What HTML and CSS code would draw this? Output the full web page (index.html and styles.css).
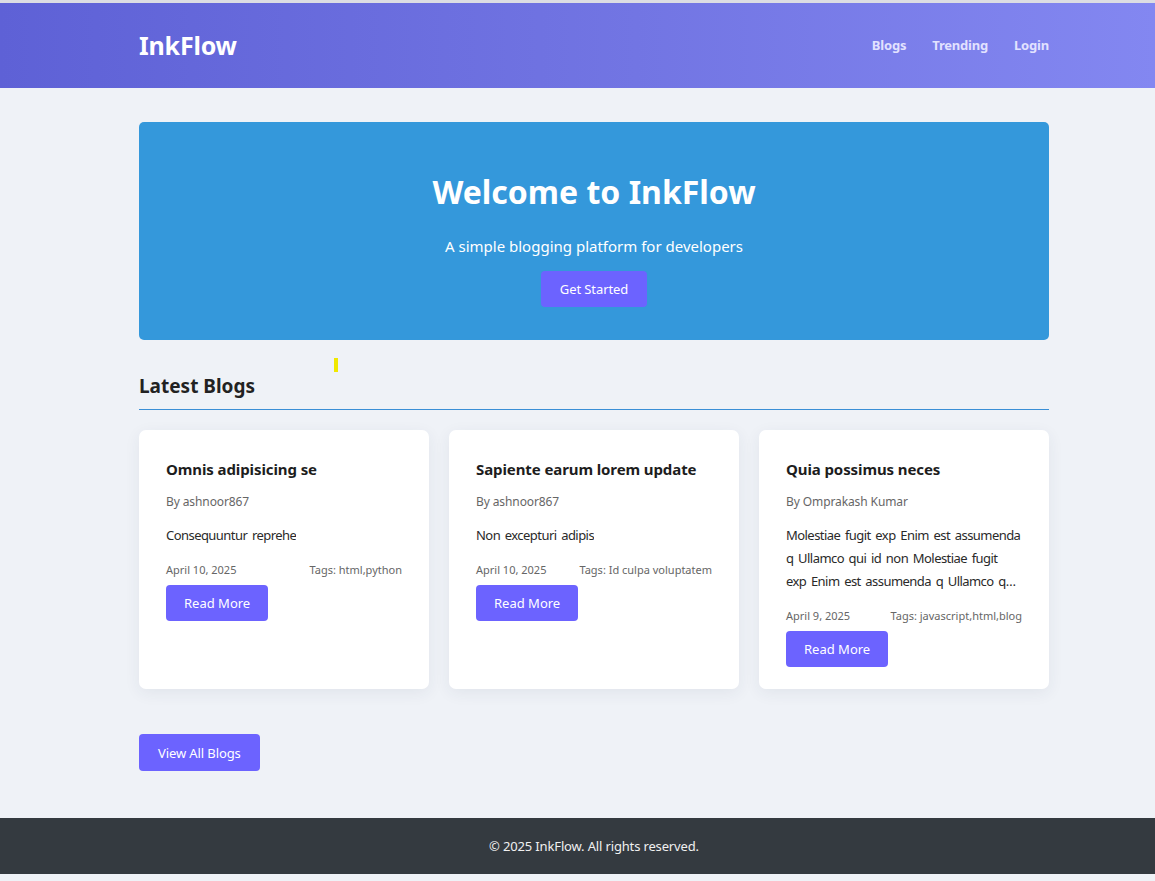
FILE: index.html
```html
<!DOCTYPE html>
<html lang="en">
<head>
<meta charset="utf-8">
<title>InkFlow</title>
<link rel="stylesheet" href="styles.css">
</head>
<body>
<header class="site-header">
  <div class="container header-inner">
    <a class="logo" href="#">InkFlow</a>
    <nav class="nav">
      <a href="#">Blogs</a>
      <a href="#">Trending</a>
      <a href="#">Login</a>
    </nav>
  </div>
</header>
<main class="container main">
  <section class="hero">
    <h1>Welcome to InkFlow</h1>
    <p>A simple blogging platform for developers</p>
    <a class="btn" href="#">Get Started</a>
  </section>
  <span class="marker"></span>
  <h2 class="section-title">Latest Blogs</h2>
  <div class="cards">
    <article class="card">
      <h3>Omnis adipisicing se</h3>
      <p class="author">By ashnoor867</p>
      <p class="excerpt">Consequuntur reprehe</p>
      <div class="meta"><span>April 10, 2025</span><span>Tags: html,python</span></div>
      <a class="btn" href="#">Read More</a>
    </article>
    <article class="card">
      <h3>Sapiente earum lorem update</h3>
      <p class="author">By ashnoor867</p>
      <p class="excerpt">Non excepturi adipis</p>
      <div class="meta"><span>April 10, 2025</span><span>Tags: Id culpa voluptatem</span></div>
      <a class="btn" href="#">Read More</a>
    </article>
    <article class="card">
      <h3>Quia possimus neces</h3>
      <p class="author">By Omprakash Kumar</p>
      <p class="excerpt">Molestiae fugit exp Enim est assumenda q Ullamco qui id non Molestiae fugit exp Enim est assumenda q Ullamco qui id non</p>
      <div class="meta"><span>April 9, 2025</span><span>Tags: javascript,html,blog</span></div>
      <a class="btn" href="#">Read More</a>
    </article>
  </div>
  <div class="more">
    <a class="btn btn-lg" href="#">View All Blogs</a>
  </div>
</main>
<footer class="site-footer">
  <div class="container footer-inner">
    <p>&copy; 2025 InkFlow. All rights reserved.</p>
  </div>
</footer>
</body>
</html>
```

FILE: styles.css
```css
* { box-sizing: border-box; }
html, body { margin: 0; padding: 0; }
body {
  background: #eff2f7;
  font-family: "Noto Sans", "Open Sans", sans-serif;
  color: #222;
  border-top: 3px solid #dcdde3;
  padding-bottom: 7px;
}
a { text-decoration: none; }
.container {
  width: 910px;
  margin-left: 139px;
  margin-right: 106px;
}
.site-header {
  background: linear-gradient(90deg, #5e61d6 0%, #7275e3 55%, #8387f1 100%);
  height: 85px;
}
.header-inner {
  height: 100%;
  display: flex;
  align-items: center;
  justify-content: space-between;
  padding-bottom: 2px;
}
.logo {
  color: #fff;
  font-weight: 700;
  font-size: 25px;
  letter-spacing: -0.2px;
}
.nav {
  display: flex;
  gap: 26px;
}
.nav a {
  color: #e2e2ff;
  font-weight: 700;
  font-size: 13px;
  letter-spacing: -0.2px;
}
.main {
  padding-top: 34px;
  padding-bottom: 47px;
}
.hero {
  background: #3498db;
  border-radius: 5px;
  height: 218px;
  padding-top: 46px;
  text-align: center;
  color: #fff;
}
.hero h1 {
  margin: 0;
  font-size: 32px;
  line-height: 48px;
  font-weight: 700;
}
.hero p {
  margin: 18px 0 0;
  font-size: 15px;
  line-height: 24px;
}
.btn {
  display: inline-flex;
  align-items: center;
  justify-content: center;
  background: #6c63ff;
  color: #fff;
  border-radius: 4px;
  font-size: 13px;
  height: 36px;
  padding: 0 18px;
}
.hero .btn {
  margin-top: 13px;
  padding: 0 19px;
  letter-spacing: -0.1px;
}
.marker {
  position: absolute;
  left: 334px;
  top: 358px;
  width: 4px;
  height: 14px;
  background: #f0e800;
}
.section-title {
  margin: 33px 0 0;
  padding-bottom: 9px;
  font-size: 19px;
  line-height: 27px;
  font-weight: 700;
  color: #222;
  border-bottom: 1px solid #3a8fd6;
}
.cards {
  margin-top: 20px;
  display: grid;
  grid-template-columns: repeat(3, 1fr);
  gap: 20px;
}
.card {
  background: #fff;
  border-radius: 7px;
  padding: 28px 27px 22px;
  box-shadow: 0 4px 16px rgba(40, 50, 90, 0.07);
  display: flex;
  flex-direction: column;
  align-items: flex-start;
}
.card h3 {
  margin: 0;
  font-size: 15px;
  line-height: 22px;
  font-weight: 700;
  color: #1d1d1d;
  letter-spacing: -0.1px;
}
.author {
  margin: 13px 0 0;
  font-size: 12px;
  line-height: 18px;
  color: #666;
  letter-spacing: -0.1px;
}
.excerpt {
  margin: 13px 0 0;
  font-size: 13px;
  line-height: 23px;
  color: #2a2a2a;
  letter-spacing: -0.55px;
  word-spacing: 1.8px;
  display: -webkit-box;
  -webkit-line-clamp: 3;
  -webkit-box-orient: vertical;
  overflow: hidden;
}
.meta {
  align-self: stretch;
  margin-top: 15px;
  display: flex;
  justify-content: space-between;
  font-size: 11px;
  line-height: 16px;
  color: #666;
}
.card .btn {
  margin-top: 7px;
}
.more {
  margin-top: 45px;
}
.btn-lg {
  height: 37px;
  padding: 0 19px;
  letter-spacing: -0.1px;
}
.site-footer {
  background: #343a40;
  color: #f0f0f0;
  height: 56px;
}
.footer-inner {
  height: 100%;
  display: flex;
  align-items: center;
  justify-content: center;
}
.site-footer p {
  margin: 0;
  font-size: 13px;
  letter-spacing: -0.15px;
}
```
